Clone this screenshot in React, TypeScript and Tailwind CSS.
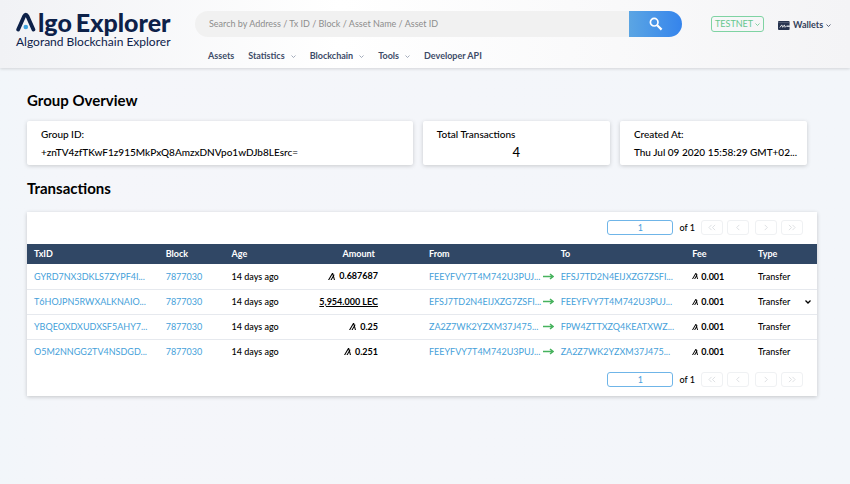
import React from 'react'

const transactions = [
  { id: 'GYRD7NX3DKLS7ZYPF4I...', amount: '0.687687', from: 'FEEYFVY7T4M742U3PUJ...', to: 'EFSJ7TD2N4EIJXZG7ZSFI...' },
  { id: 'T6HOJPN5RWXALKNAIO...', asset: '5,954.000 LEC', from: 'EFSJ7TD2N4EIJXZG7ZSFI...', to: 'FEEYFVY7T4M742U3PUJ...' },
  { id: 'YBQEOXDXUDXSF5AHY7...', amount: '0.25', from: 'ZA2Z7WK2YZXM37J475...', to: 'FPW4ZTTXZQ4KEATXWZ...' },
  { id: 'O5M2NNGG2TV4NSDGD...', amount: '0.251', from: 'FEEYFVY7T4M742U3PUJ...', to: 'ZA2Z7WK2YZXM37J475...' },
]

const navItems = [
  { label: 'Assets', menu: false },
  { label: 'Statistics', menu: true },
  { label: 'Blockchain', menu: true },
  { label: 'Tools', menu: true },
  { label: 'Developer API', menu: false },
]

const AlgoIcon: React.FC<{ className: string }> = ({ className }) => (
  <svg viewBox="0 0 24 24" fill="currentColor" className={className} aria-hidden="true">
    <path d="M24 23.98h-3.75l-2.437-9.068L12.57 24H8.388l8.111-14.07-1.308-4.878L4.2 24.02H0L13.88 0h3.673l1.621 5.99h3.795l-2.586 4.5L24 23.98z" />
  </svg>
)

const Caret: React.FC<{ className?: string }> = ({ className = '' }) => (
  <svg viewBox="0 0 10 6" fill="none" stroke="currentColor" strokeWidth="1.6" className={`h-[3px] w-[5px] ${className}`} aria-hidden="true">
    <path d="M1 1l4 4 4-4" />
  </svg>
)

const Logo: React.FC = () => (
  <a href="#" className="block text-[#0d2149]">
    <span className="flex h-6 items-center">
      <svg viewBox="0 0 20 20" className="h-5 w-5" role="img" aria-label="A">
        <path d="M2.2 17.6L8 4.4Q9.8 1 11.6 4.4L17.4 17.6" fill="none" stroke="#0d2149" strokeWidth="3.8" strokeLinecap="round" strokeLinejoin="round" />
        <circle cx="9.8" cy="15" r="2.3" fill="#3fa3e0" />
      </svg>
      <span className="pl-0.5 text-[25px] leading-6 font-black">lgo</span>
      <span className="pl-1 text-[25px] leading-6 font-black">Explorer</span>
    </span>
    <span className="block pt-0.5 text-xs leading-3">Algorand Blockchain Explorer</span>
  </a>
)

const Header: React.FC = () => (
  <header className="flex h-[68px] bg-linear-to-r from-[#f1f2f5] via-white via-40% to-[#f4f4f6] shadow-[0_1px_3px_rgba(0,0,0,0.14)]">
    <div className="w-[195px] shrink-0 pt-2.5 pl-4">
      <Logo />
    </div>
    <div className="min-w-0 flex-1 pt-[11px]">
      <form className="flex h-[26px]">
        <input
          type="search"
          aria-label="Search"
          placeholder="Search by Address / Tx ID / Block / Asset Name / Asset ID"
          className="min-w-0 flex-1 rounded-l-full bg-[#f1f1f1] pl-3.5 text-[9px] outline-none placeholder:text-[#8d8d8d]"
        />
        <button type="button" aria-label="Search" className="flex w-[53px] items-center justify-center rounded-r-full bg-linear-to-r from-[#5ba5e3] to-[#3584ec] text-white">
          <svg viewBox="0 0 14 14" fill="none" stroke="currentColor" className="h-[14px] w-[14px]" aria-hidden="true">
            <circle cx="5.2" cy="5.2" r="3.8" strokeWidth="1.7" />
            <path d="M8.2 8.2l4.4 4.4" strokeWidth="2.2" />
          </svg>
        </button>
      </form>
      <nav className="flex gap-3.5 pt-[13px] pl-[13px] text-[9px] leading-3 font-bold text-[#3d4b68]">
        {navItems.map((item) =>
          item.menu ? (
            <button key={item.label} type="button" className="flex items-center gap-1.5">
              {item.label}
              <Caret className="text-[#8b95a8]" />
            </button>
          ) : (
            <a key={item.label} href="#">{item.label}</a>
          )
        )}
      </nav>
    </div>
    <div className="flex w-[168px] shrink-0 items-start gap-3.5 pt-4 pl-[29px]">
      <button type="button" className="flex h-4 items-center gap-0.5 rounded-[3px] border border-[#7fd3a3] px-[3px] text-[9px] text-[#65c78e]">
        TESTNET
        <Caret />
      </button>
      <button type="button" className="flex h-[18px] items-center gap-[3px] text-[9px] font-bold text-[#333f5a]">
        <svg viewBox="0 0 12 9" className="h-[9px] w-3" aria-hidden="true">
          <rect width="11.6" height="9" rx="1" fill="#27334f" />
          <path d="M0 1.6h11" stroke="#7d869a" strokeWidth=".5" />
          <path d="M1.8 6.5l2-2.6.9 2.4 1.7-2.4.7 2.4 1.1-1.2" fill="none" stroke="#fff" strokeWidth=".8" />
          <path d="M8.5 4.5H12v1.4H8.5z" fill="#dfe2e8" />
        </svg>
        Wallets
        <Caret />
      </button>
    </div>
  </header>
)

const pagerPaths = [
  { label: 'First page', d: 'M5 1L2 4l3 3M9 1L6 4l3 3' },
  { label: 'Previous page', d: 'M7 1L4 4l3 3' },
  { label: 'Next page', d: 'M4 1l3 3-3 3' },
  { label: 'Last page', d: 'M2 1l3 3-3 3M6 1l3 3-3 3' },
]

const Pager: React.FC = () => (
  <div className="flex h-8 items-center justify-end pr-3.5 pb-px text-[9px] text-black">
    <input aria-label="Page" defaultValue="1" className="h-[15px] w-[66px] rounded-[3px] border border-[#6fb5e8] text-center text-[#4aa0dd] outline-none" />
    <span className="px-1.5 font-medium">of 1</span>
    <div className="flex gap-1.5">
      {[pagerPaths.slice(0, 2), pagerPaths.slice(2)].map((group) => (
        <div key={group[0].label} className="flex gap-1">
          {group.map((item) => (
            <button key={item.label} type="button" disabled aria-label={item.label} className="flex h-[15px] w-[22px] items-center justify-center rounded-[3px] border border-[#eff1f3] text-[#d9dcdf]">
              <svg viewBox="0 0 11 8" fill="none" stroke="currentColor" strokeWidth="1" className="h-[7px] w-[10px]" aria-hidden="true">
                <path d={item.d} />
              </svg>
            </button>
          ))}
        </div>
      ))}
    </div>
  </div>
)

const TransactionTable: React.FC = () => (
  <table className="w-full table-fixed text-left text-[9px] whitespace-nowrap">
    <thead className="bg-[#304765] text-white">
      <tr className="h-5">
        <th className="w-2/12 pl-[7px]">TxID</th>
        <th className="w-1/12 pl-[7px]">Block</th>
        <th className="w-1/12 pl-[7px]">Age</th>
        <th className="w-2/12 pr-[47px] text-right">Amount</th>
        <th className="w-2/12 pl-[7px]">From</th>
        <th className="w-2/12 pl-[7px]">To</th>
        <th className="w-1/12 pl-[7px]">Fee</th>
        <th className="w-1/12 pl-[7px]">Type</th>
      </tr>
    </thead>
    <tbody className="divide-y divide-[#e6e9ee] text-black">
      {transactions.map((tx) => (
        <tr key={tx.id} className="h-[25px]">
          <td className="pl-[7px]"><a href="#" className="text-[#459fda]">{tx.id}</a></td>
          <td className="pl-[7px]"><a href="#" className="text-[#459fda]">7877030</a></td>
          <td className="pl-[7px] font-medium">14 days ago</td>
          <td className="pr-11 text-right font-bold">
            {tx.asset ? (
              <a href="#" className="underline">{tx.asset}</a>
            ) : (
              <span className="inline-flex items-center gap-1">
                <AlgoIcon className="h-[7px] w-[7px]" />
                {tx.amount}
              </span>
            )}
          </td>
          <td className="pl-[7px]">
            <div className="flex items-center justify-between">
              <a href="#" className="text-[#459fda]">{tx.from}</a>
              <svg viewBox="0 0 11 7" fill="none" stroke="#46b25d" strokeWidth="1.5" className="h-[7px] w-[11px] shrink-0" aria-hidden="true">
                <path d="M0 3.5h10M7 1l3 2.5L7 6" />
              </svg>
            </div>
          </td>
          <td className="pl-[7px]"><a href="#" className="text-[#459fda]">{tx.to}</a></td>
          <td className="pl-[7px] font-bold">
            <span className="inline-flex items-center gap-[3px]">
              <AlgoIcon className="h-1.5 w-1.5" />
              0.001
            </span>
          </td>
          <td className="pr-1.5 pl-[7px] font-medium">
            <div className="flex items-center justify-between">
              Transfer
              {tx.asset && (
                <button type="button" aria-label="Show details">
                  <svg viewBox="0 0 6 4" fill="none" stroke="currentColor" strokeWidth="1.3" className="h-1 w-1.5" aria-hidden="true">
                    <path d="M.5.5L3 3 5.5.5" />
                  </svg>
                </button>
              )}
            </div>
          </td>
        </tr>
      ))}
    </tbody>
  </table>
)

export default function App() {
  return (
    <div className="min-h-screen bg-linear-to-r from-[#f2f6fa] via-[#f5f6fa] via-10% to-[#f3f6fa] font-[Lato,sans-serif]">
      <Header />
      <main className="pt-6 pr-[33px] pb-8 pl-[27px] text-black">
        <h1 className="text-[15px] leading-4 font-bold">Group Overview</h1>
        <div className="grid grid-cols-[33fr_16fr_16fr] items-start gap-2.5 pt-[13px] pr-2.5 text-[10px] leading-[18px] font-medium whitespace-nowrap">
          <section className="min-w-0 rounded-xs bg-white px-3.5 py-1 shadow-[0_1px_4px_rgba(0,0,0,0.18)]">
            <h2>Group ID:</h2>
            <p>+znTV4zfTKwF1z915MkPxQ8AmzxDNVpo1wDJb8LEsrc=</p>
          </section>
          <section className="min-w-0 rounded-xs bg-white px-3.5 py-1 shadow-[0_1px_4px_rgba(0,0,0,0.18)]">
            <h2>Total Transactions</h2>
            <p className="text-center text-[13px]">4</p>
          </section>
          <section className="min-w-0 rounded-xs bg-white px-3.5 py-1 shadow-[0_1px_4px_rgba(0,0,0,0.18)]">
            <h2>Created At:</h2>
            <p>Thu Jul 09 2020 15:58:29 GMT+02...</p>
          </section>
        </div>
        <h1 className="pt-[15px] text-[15px] leading-4 font-bold">Transactions</h1>
        <section className="mt-4 bg-white shadow-[0_1px_4px_rgba(0,0,0,0.2)]">
          <Pager />
          <TransactionTable />
          <Pager />
        </section>
      </main>
    </div>
  )
}
